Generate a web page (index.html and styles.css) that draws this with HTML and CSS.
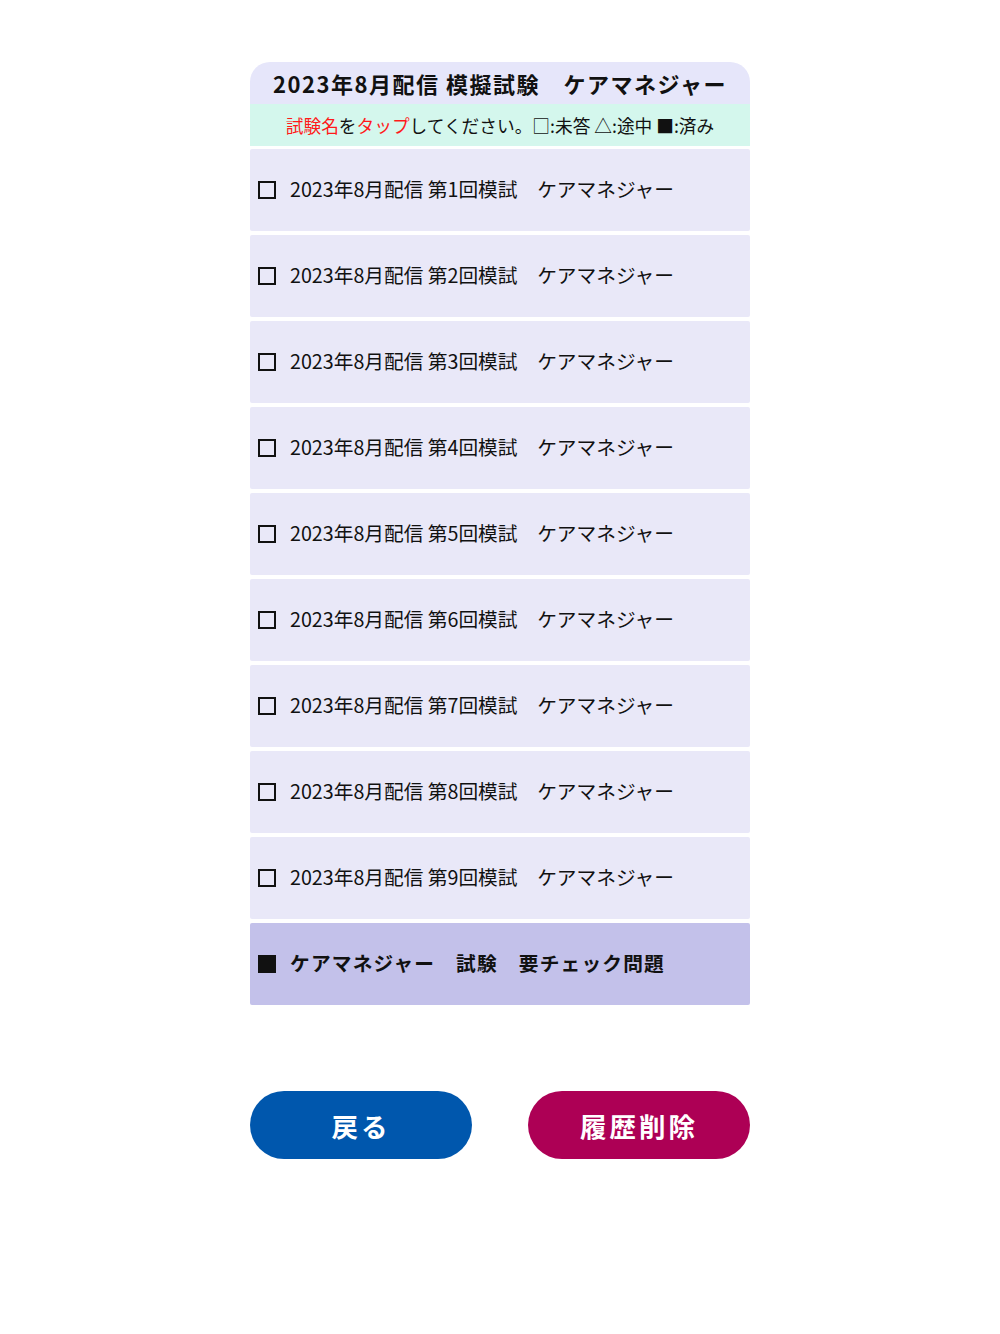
FILE: index.html
```html
<!DOCTYPE html>
<html lang="ja">
<head>
    <meta charset="UTF-8">
    <meta name="viewport" content="width=device-width, initial-scale=1.0">
    <title>模擬試験一覧</title>
    <link rel="stylesheet" href="styles.css">
</head>
<body>
    <div class="panel">
        <h1 class="titulo">2023年8月配信 模擬試験　ケアマネジャー</h1>
        <p class="aviso"><span class="rojo">試験名</span>を<span class="rojo">タップ</span>してください。□:未答 △:途中 ■:済み</p>

        <ul class="lista">
            <li class="item"><span class="marca"></span>2023年8月配信 第1回模試　ケアマネジャー</li>
            <li class="item"><span class="marca"></span>2023年8月配信 第2回模試　ケアマネジャー</li>
            <li class="item"><span class="marca"></span>2023年8月配信 第3回模試　ケアマネジャー</li>
            <li class="item"><span class="marca"></span>2023年8月配信 第4回模試　ケアマネジャー</li>
            <li class="item"><span class="marca"></span>2023年8月配信 第5回模試　ケアマネジャー</li>
            <li class="item"><span class="marca"></span>2023年8月配信 第6回模試　ケアマネジャー</li>
            <li class="item"><span class="marca"></span>2023年8月配信 第7回模試　ケアマネジャー</li>
            <li class="item"><span class="marca"></span>2023年8月配信 第8回模試　ケアマネジャー</li>
            <li class="item"><span class="marca"></span>2023年8月配信 第9回模試　ケアマネジャー</li>
            <li class="item item-check"><span class="marca marca-llena"></span>ケアマネジャー　試験　要チェック問題</li>
        </ul>

        <div class="botones">
            <button class="btn btn-volver">戻る</button>
            <button class="btn btn-borrar">履歴削除</button>
        </div>
    </div>
</body>
</html>
```

FILE: styles.css
```css
body {
    font-family: 'Noto Sans CJK JP', 'Noto Sans', sans-serif;
    background: #ffffff;
    color: #111111;
    margin: 0;
    padding: 0;
}

.panel {
    width: 500px;
    margin: 62px auto 0;
}

.titulo {
    background-color: #e6e6fa;
    margin: 0;
    height: 42px;
    line-height: 42px;
    border-radius: 20px 20px 0 0;
    text-align: center;
    font-size: 22px;
    font-weight: bold;
    letter-spacing: 1.5px;
}

.aviso {
    background-color: #d4f7ed;
    margin: 0;
    height: 42px;
    line-height: 42px;
    text-align: center;
    font-size: 17.7px;
}

.rojo {
    color: #ff1a1a;
}

.lista {
    list-style: none;
    margin: 3px 0 0;
    padding: 0;
    display: flex;
    flex-direction: column;
    gap: 4px;
}

.item {
    background-color: #e9e8f8;
    height: 82px;
    box-sizing: border-box;
    padding: 0 0 3px 8px;
    border-radius: 2px;
    display: flex;
    align-items: center;
    font-size: 19.7px;
}

.marca {
    width: 14px;
    height: 14px;
    border: 2px solid #111111;
    margin: 3px 14px 0 0;
    flex-shrink: 0;
}

.marca-llena {
    background-color: #111111;
}

.item-check {
    background-color: #c3c1ea;
    font-weight: bold;
    letter-spacing: 1.2px;
}

.botones {
    display: flex;
    justify-content: space-between;
    margin-top: 86px;
}

.btn {
    width: 222px;
    height: 68px;
    border: none;
    border-radius: 34px;
    color: white;
    font-family: inherit;
    font-size: 26.5px;
    font-weight: bold;
    letter-spacing: 3px;
    cursor: pointer;
}

.btn-volver {
    background-color: #0057ad;
}

.btn-borrar {
    background-color: #ad0055;
}
```
